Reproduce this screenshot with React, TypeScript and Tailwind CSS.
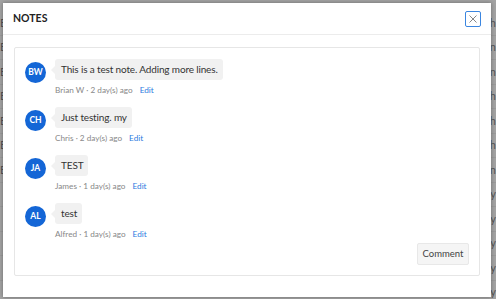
import React from "react";

const notes = [
  { initials: "BW", text: "This is a test note. Adding more lines.", who: "Brian W", when: "2 day(s) ago" },
  { initials: "CH", text: "Just testing. my", who: "Chris", when: "2 day(s) ago" },
  { initials: "JA", text: "TEST", who: "James", when: "1 day(s) ago" },
  { initials: "AL", text: "test", who: "Alfred", when: "1 day(s) ago" },
];

const rightLetters = ["h", "n", "n", "h", "h", "h", "n", "y", "y", "y", "y", "y"];
const leftLetters = ["E", "E", "E", "E", "E", "E", "E", "", "", "", "", ""];

export default function App() {
  return (
    <div
      className="relative w-[496px] h-[299px] overflow-hidden bg-[#a3a3a3]"
      style={{ fontFamily: "Lato, 'Open Sans', sans-serif" }}
    >
      {/* background table behind overlay */}
      <div className="flex flex-col pt-[11px]">
        {rightLetters.map((r, i) => (
          <div key={i} className="flex h-[24.5px] items-center justify-between border-b border-[#9a9a9a] text-[11px] text-[#555]">
            <span className="ml-0">{leftLetters[i]}</span>
            <span className="mr-0">{r}</span>
          </div>
        ))}
      </div>

      {/* modal */}
      <div className="absolute left-[3px] top-[3px] w-[488px] h-[294px] bg-white shadow-[0_0_4px_rgba(0,0,0,0.35)] flex flex-col">
        <div className="h-[32px] flex items-center justify-between pl-[10px] pr-[10px] border-b border-[#ececec]">
          <span className="text-[10.5px] font-bold text-[#222]">NOTES</span>
          <button className="w-[16px] h-[16px] mt-[1px] border border-[#3b86e0] rounded-[2px] flex items-center justify-center">
            <svg width="10" height="10" viewBox="0 0 10 10">
              <path d="M1.5 1.5 L8.5 8.5 M8.5 1.5 L1.5 8.5" stroke="#777" strokeWidth="0.9" />
            </svg>
          </button>
        </div>

        <div className="mx-[11px] mt-[12px] h-[229px] border border-[#e6e6e6] rounded-[2px] pt-[11px] px-[10px] pb-[10px] flex flex-col">
          <div className="flex flex-col gap-[11px]">
            {notes.map((n) => (
              <div key={n.initials} className="flex items-start gap-[9px]">
                <div className="w-[21px] h-[21px] mt-[3px] rounded-full bg-[#1466d6] text-white text-[8.5px] font-bold flex items-center justify-center">
                  {n.initials}
                </div>
                <div className="flex flex-col">
                  <div className="relative self-start h-[21px] bg-[#f1f1f1] rounded-[3px] pl-[6px] pr-[5px] flex items-center text-[10px] tracking-[-0.15px] text-[#333]">
                    <span className="absolute left-[-4px] top-[7px] w-0 h-0 border-t-[4px] border-b-[4px] border-r-[4px] border-t-transparent border-b-transparent border-r-[#f1f1f1]" />
                    {n.text}
                  </div>
                  <div className="mt-[4px] h-[12px] flex items-center text-[8.2px] text-[#888]">
                    <span>{n.who} · {n.when}</span>
                    <span className="ml-[7px] text-[#2d7be0]">Edit</span>
                  </div>
                </div>
              </div>
            ))}
          </div>
          <div className="mt-auto flex justify-end">
            <button className="w-[52px] h-[22px] bg-[#f5f5f5] border border-[#e8e8e8] rounded-[2px] text-[9.5px] text-[#444]">
              Comment
            </button>
          </div>
        </div>
      </div>
    </div>
  );
}
